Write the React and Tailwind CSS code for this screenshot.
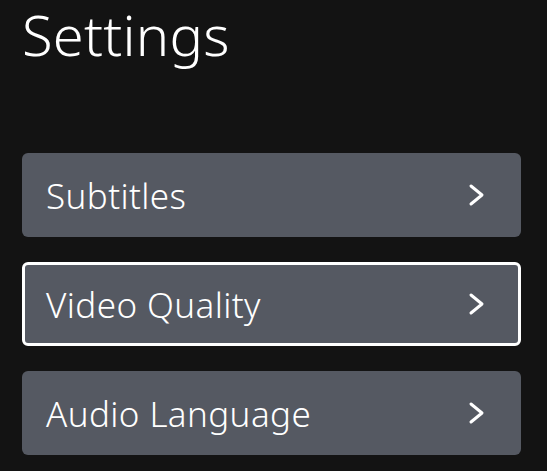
import React from 'react';

const items = [
    { label: 'Subtitles', active: false },
    { label: 'Video Quality', active: true },
    { label: 'Audio Language', active: false },
];

function Chevron() {
    return (
        <svg width="20" height="24" viewBox="0 0 20 24" fill="none">
            <path d="M4 3 L15 12 L4 21" stroke="white" strokeWidth="3" strokeLinecap="round" strokeLinejoin="round" />
        </svg>
    );
}

export default function App() {
    return (
        <div className="w-[547px] h-[471px] bg-[#131313] overflow-hidden text-white px-[22px]" style={{ fontFamily: '"Noto Sans", "Open Sans", sans-serif' }}>
            {/* Titulo */}
            <h1 className="-mt-[4px] text-[56px] leading-[77px] font-light tracking-[0.25px]">Settings</h1>

            {/* Opciones */}
            <div className="mt-[80px] w-[499px] flex flex-col gap-[25px]">
                {items.map((item) => (
                    <button
                        key={item.label}
                        className={`h-[84px] rounded-[6px] bg-[#555962] border-[3px] flex items-center justify-between pl-[21px] pr-[31px] text-left ${item.active ? 'border-white' : 'border-transparent'}`}
                    >
                        <span className="text-[35px] leading-none font-light tracking-[0.4px] text-white">{item.label}</span>
                        <Chevron />
                    </button>
                ))}
            </div>
        </div>
    );
}
